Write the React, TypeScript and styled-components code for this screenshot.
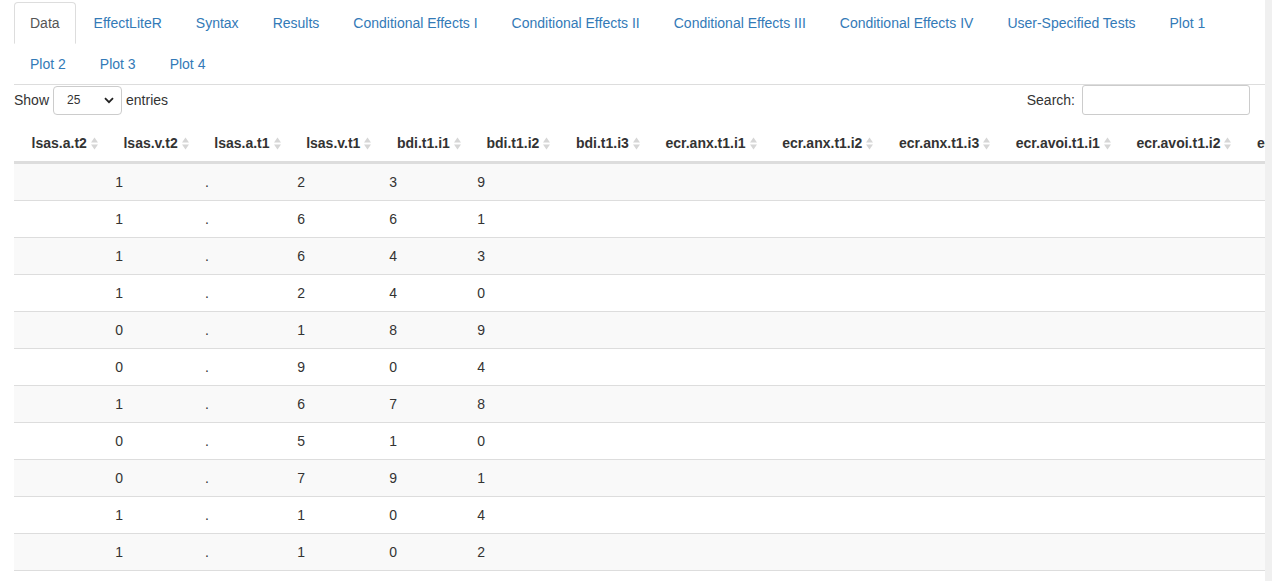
import React from "react";
import styled, { createGlobalStyle } from "styled-components";

const GlobalStyle = createGlobalStyle`
  html, body {
    margin: 0;
    padding: 0;
    overflow: hidden;
    background: #ffffff;
  }
  body {
    font-family: "Liberation Sans", Arial, Helvetica, sans-serif;
    font-size: 14px;
    line-height: 20px;
    color: #333333;
    -webkit-font-smoothing: antialiased;
  }
  * { box-sizing: border-box; }
`;

const Page = styled.div`
  display: flex;
  width: 1272px;
  height: 581px;
  overflow: hidden;
`;

const Main = styled.div`
  flex: 1;
  min-width: 0;
  padding: 2px 0 0 14px;
  overflow: hidden;
`;

const ScrollStrip = styled.div`
  width: 7px;
  flex: none;
  background: #f0f0f0;
`;

const Tabs = styled.ul`
  display: flex;
  flex-wrap: wrap;
  list-style: none;
  margin: 0;
  padding: 0;
  border-bottom: 1px solid #dddddd;
`;

const TabItem = styled.li`
  margin: 0 2px -1px 0;
`;

const TabLink = styled.a<{ $active?: boolean }>`
  display: block;
  padding: 10px 15px;
  line-height: 20px;
  border: 1px solid ${(p) => (p.$active ? "#dddddd" : "transparent")};
  border-bottom-color: ${(p) => (p.$active ? "#ffffff" : "transparent")};
  border-radius: 4px 4px 0 0;
  background: ${(p) => (p.$active ? "#ffffff" : "transparent")};
  color: ${(p) => (p.$active ? "#555555" : "#337ab7")};
  text-decoration: none;
  white-space: nowrap;
  cursor: pointer;
`;

const Controls = styled.div`
  display: flex;
  justify-content: space-between;
  align-items: center;
  height: 30px;
  padding-right: 15px;
`;

const ControlLabel = styled.label`
  display: flex;
  align-items: center;
  gap: 4px;
  white-space: nowrap;
`;

const SelectWrap = styled.span`
  position: relative;
  display: inline-block;
  width: 69px;
  height: 29px;
`;

const Select = styled.select`
  appearance: none;
  width: 100%;
  height: 100%;
  padding: 0 0 0 13px;
  font-family: "Liberation Sans", Arial, sans-serif;
  font-size: 12px;
  color: #333333;
  background: #ffffff;
  border: 1px solid #cccccc;
  border-radius: 4px;
  outline: none;
`;

const Chevron = styled.svg`
  position: absolute;
  right: 8px;
  top: 11px;
  pointer-events: none;
`;

const SearchInput = styled.input`
  width: 168px;
  height: 30px;
  margin-left: 3px;
  border: 1px solid #cccccc;
  border-radius: 3px;
  padding: 5px 10px;
  font-size: 12px;
  outline: none;
`;

const ScrollArea = styled.div`
  margin-top: 10px;
  overflow: hidden;
`;

const HeadTable = styled.table`
  border-collapse: collapse;
  border-spacing: 0;
`;

const HeadCell = styled.th`
  padding: 8px 8px 8px 17.6px;
  border-bottom: 2px solid #dddddd;
  font-weight: bold;
  text-align: left;
  white-space: nowrap;
  color: #333333;
`;

const HeadInner = styled.span`
  display: inline-flex;
  align-items: center;
  gap: 4px;
`;

const BodyTable = styled.table`
  width: 100%;
  table-layout: fixed;
  border-collapse: collapse;
  border-spacing: 0;
`;

const Row = styled.tr<{ $odd: boolean }>`
  background: ${(p) => (p.$odd ? "#f9f9f9" : "#ffffff")};
`;

const Cell = styled.td<{ $w?: number }>`
  ${(p) => (p.$w ? `width: ${p.$w}px;` : "")}
  padding: 8px;
  border-top: 1px solid #dddddd;
  text-align: right;
  line-height: 20px;
  color: #333333;
  white-space: nowrap;
`;

const LastLine = styled.tr`
  td {
    border-top: 1px solid #dddddd;
    padding: 0;
    height: 0;
  }
`;

const tabs = [
  "Data",
  "EffectLiteR",
  "Syntax",
  "Results",
  "Conditional Effects I",
  "Conditional Effects II",
  "Conditional Effects III",
  "Conditional Effects IV",
  "User-Specified Tests",
  "Plot 1",
  "Plot 2",
  "Plot 3",
  "Plot 4",
];

const headers = [
  "lsas.a.t2",
  "lsas.v.t2",
  "lsas.a.t1",
  "lsas.v.t1",
  "bdi.t1.i1",
  "bdi.t1.i2",
  "bdi.t1.i3",
  "ecr.anx.t1.i1",
  "ecr.anx.t1.i2",
  "ecr.anx.t1.i3",
  "ecr.avoi.t1.i1",
  "ecr.avoi.t1.i2",
  "ecr.avoi.t1.i3",
];

const rows: string[][] = [
  ["1", ".", "2", "3", "9"],
  ["1", ".", "6", "6", "1"],
  ["1", ".", "6", "4", "3"],
  ["1", ".", "2", "4", "0"],
  ["0", ".", "1", "8", "9"],
  ["0", ".", "9", "0", "4"],
  ["1", ".", "6", "7", "8"],
  ["0", ".", "5", "1", "0"],
  ["0", ".", "7", "9", "1"],
  ["1", ".", "1", "0", "4"],
  ["1", ".", "1", "0", "2"],
  ["0", ".", "3", "5", "6"],
  ["1", ".", "4", "2", "7"],
  ["0", ".", "8", "3", "2"],
];

const colWidths = [117, 86, 96, 92, 88];

const SortIcon = () => (
  <svg width="7" height="13" viewBox="0 0 7 13" aria-hidden="true">
    <polygon points="3.5,0.5 7,5.5 0,5.5" fill="#d6d6d6" />
    <polygon points="0,7.5 7,7.5 3.5,12.5" fill="#d6d6d6" />
  </svg>
);

export default function App() {
  return (
    <>
      <GlobalStyle />
      <Page>
        <Main>
          <Tabs>
            {tabs.map((t, i) => (
              <TabItem key={t}>
                <TabLink $active={i === 0}>{t}</TabLink>
              </TabItem>
            ))}
          </Tabs>
          <Controls>
            <ControlLabel>
              Show
              <SelectWrap>
                <Select defaultValue="25">
                  <option value="10">10</option>
                  <option value="25">25</option>
                  <option value="50">50</option>
                  <option value="100">100</option>
                </Select>
                <Chevron width="10" height="7" viewBox="0 0 10 7">
                  <polyline
                    points="1,1.2 5,5.2 9,1.2"
                    fill="none"
                    stroke="#222222"
                    strokeWidth="1.8"
                  />
                </Chevron>
              </SelectWrap>
              entries
            </ControlLabel>
            <ControlLabel>
              Search:
              <SearchInput type="search" />
            </ControlLabel>
          </Controls>
          <ScrollArea>
            <HeadTable>
              <thead>
                <tr>
                  {headers.map((h) => (
                    <HeadCell key={h}>
                      <HeadInner>
                        {h}
                        <SortIcon />
                      </HeadInner>
                    </HeadCell>
                  ))}
                </tr>
              </thead>
            </HeadTable>
            <BodyTable>
              <tbody>
                {rows.map((r, i) => (
                  <Row key={i} $odd={i % 2 === 0}>
                    {r.map((v, j) => (
                      <Cell key={j} $w={colWidths[j]}>
                        {v}
                      </Cell>
                    ))}
                    <Cell />
                  </Row>
                ))}
                <LastLine>
                  <td colSpan={6} />
                </LastLine>
              </tbody>
            </BodyTable>
          </ScrollArea>
        </Main>
        <ScrollStrip />
      </Page>
    </>
  );
}
